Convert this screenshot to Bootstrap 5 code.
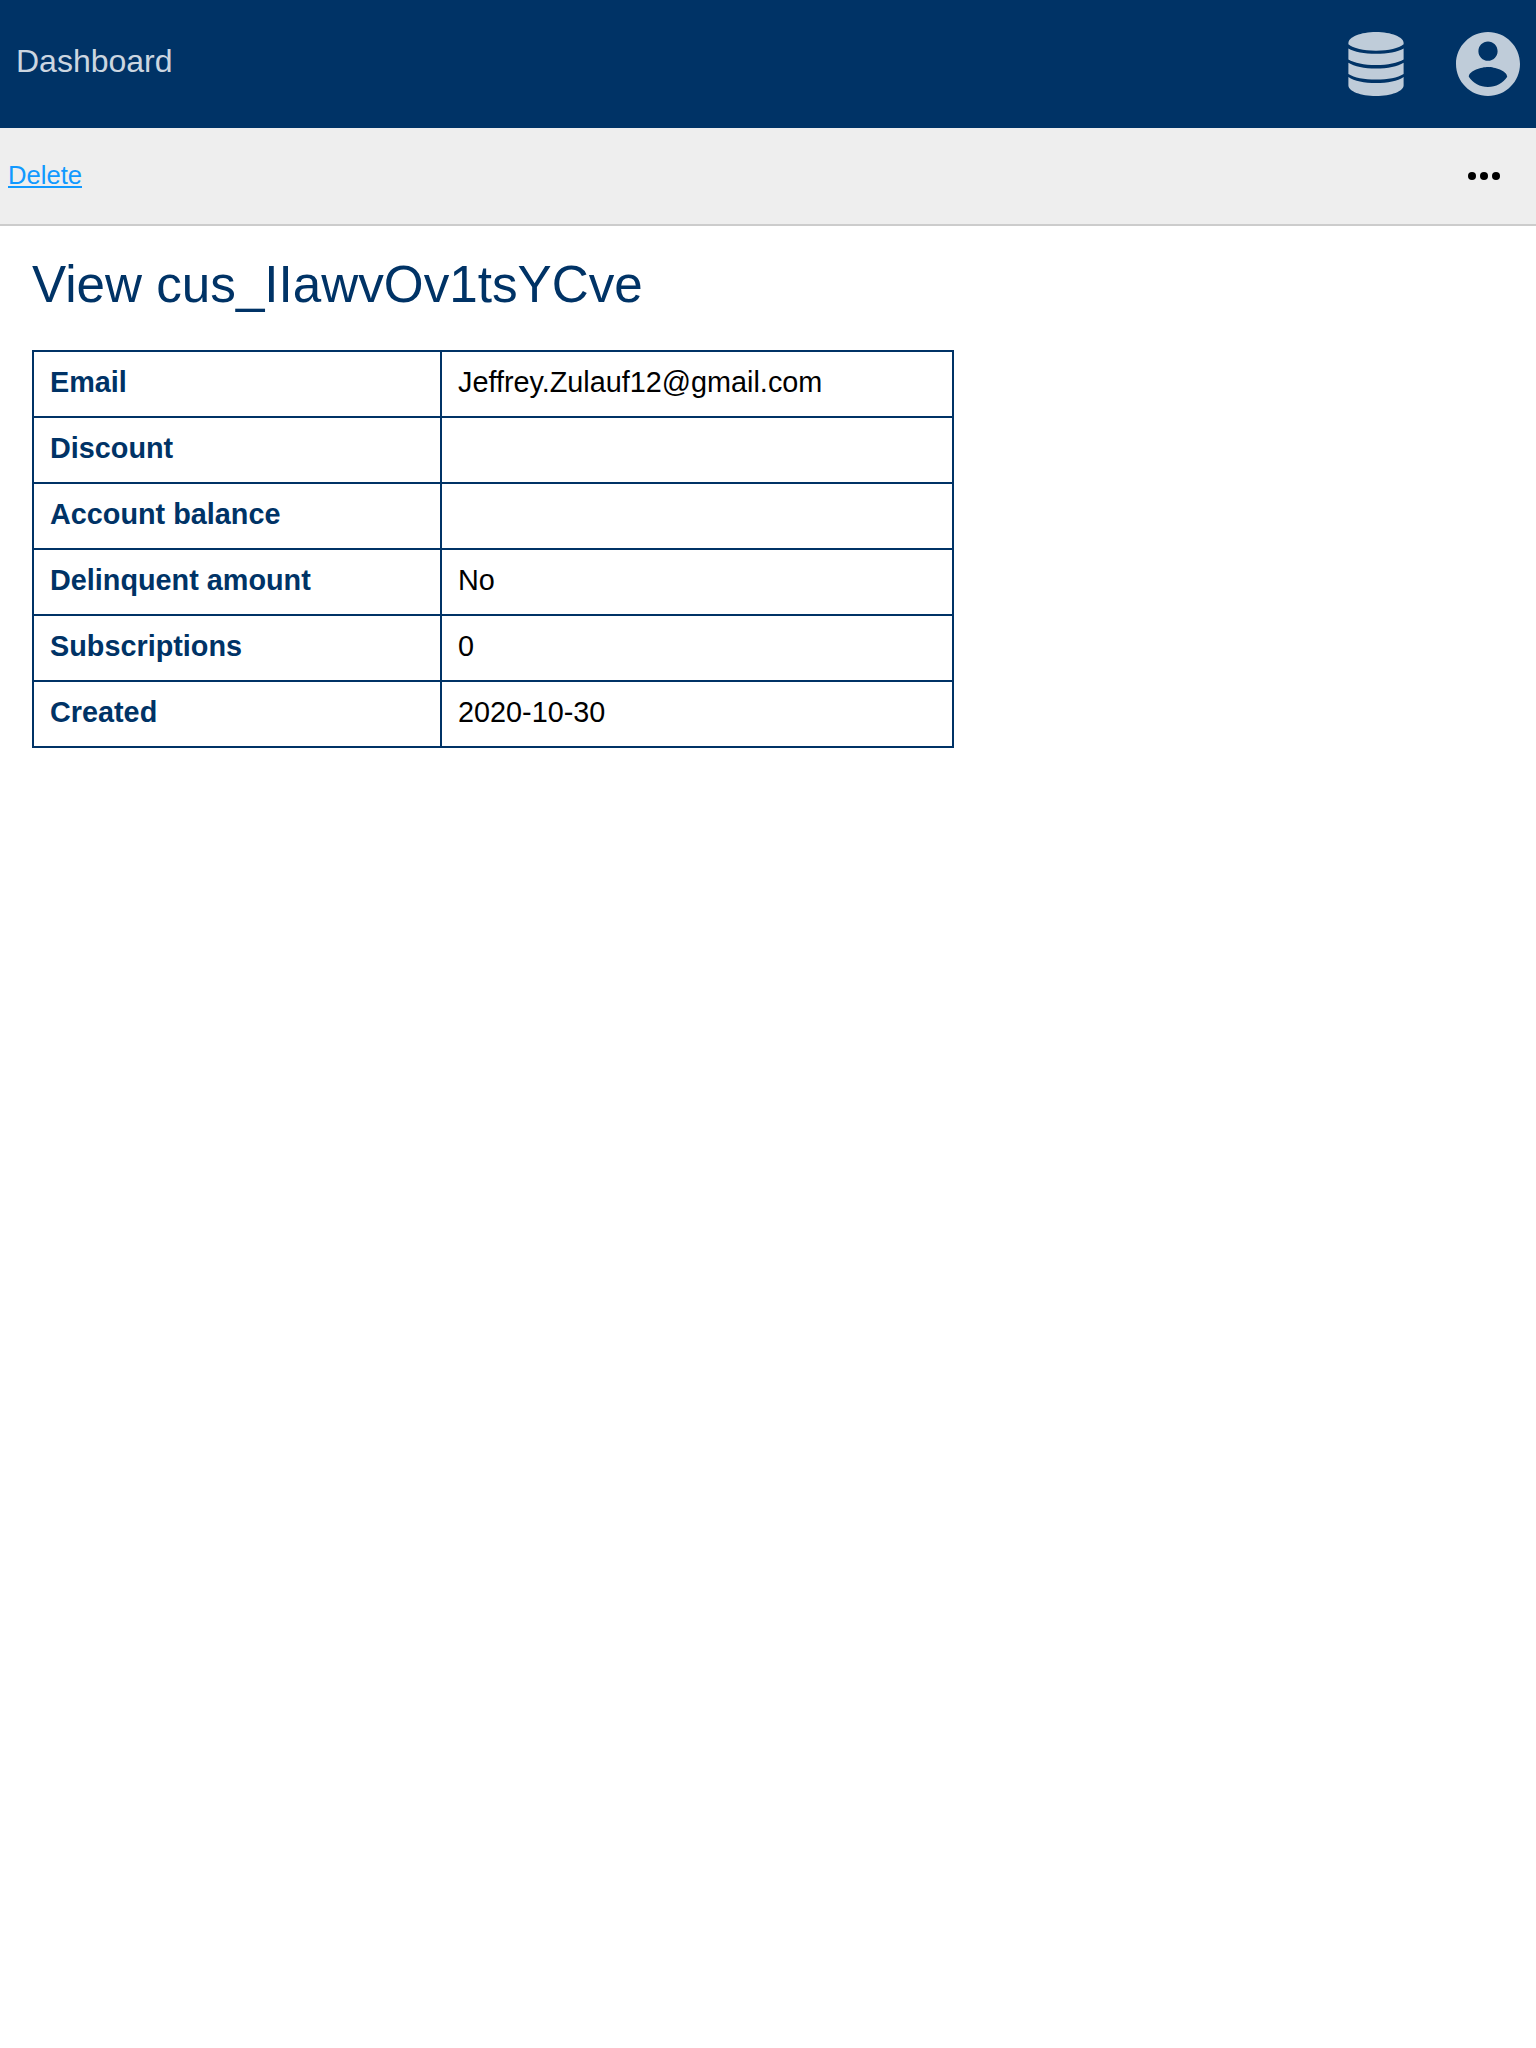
<!DOCTYPE html>
<html lang="en">
<head>
<meta charset="utf-8">
<meta name="viewport" content="width=device-width, initial-scale=1">
<title>View customer</title>
<link href="https://cdn.jsdelivr.net/npm/bootstrap@5.3.0/dist/css/bootstrap.min.css" rel="stylesheet">
<style>
  body { font-family: "Liberation Sans", Arial, sans-serif; color: #000; background: #fff; }
  .site-header { height: 128px; background: #003366; padding: 0 16px; }
  .site-title { font-size: 32px; line-height: 32px; color: #ccd6e0; margin-bottom: 6px; }
  .header-icons { gap: 52px; color: #bfccd9; }
  .toolbar-strip { height: 98px; background: #eee; border-bottom: 2px solid #ccc; padding: 0 36px 0 8px; }
  .delete-link { font-size: 25.6px; line-height: 32px; color: #1199ff; margin-bottom: 2px; text-decoration-thickness: 2px !important; text-underline-offset: 2px; }
  .page-body { padding: 27px 32px; }
  .page-title { font-size: 51.2px; line-height: 64px; font-weight: 400; color: #003366; margin-bottom: 33px; }
  .detail-table { width: 922px; table-layout: fixed; border-collapse: separate; border-spacing: 0; font-size: 28.8px; line-height: 32px; border: 2px solid #003366; border-bottom: 0; }
  .detail-table th, .detail-table td { padding: 14px 16px 18px; border-bottom: 2px solid #003366; }
  .detail-table th { width: 408px; color: #003366; border-right: 2px solid #003366; }
</style>
</head>
<body>
<header class="site-header d-flex align-items-center justify-content-between">
  <a class="site-title text-decoration-none" href="#">Dashboard</a>
  <nav class="header-icons d-flex align-items-center">
    <a href="#" class="d-flex text-reset" aria-label="Data">
      <svg width="56" height="64" viewBox="-0.4 0 56.8 64" preserveAspectRatio="none" fill="currentColor">
        <path d="M0 11C0 5 12.500 0 28 0S56 5 56 11V12.300C51 16.500 41 18.700 28 18.700S5 16.500 0 12.300Z"/>
        <path d="M0 16.500C6 20 16 21.800 28 21.800S50 20 56 16.500V27.500C50 31 40 33 28 33S6 31 0 27.500Z"/>
        <path d="M0 30.700C6 34.500 16 36.600 28 36.600S50 34.500 56 30.700V42C50 45.700 40 47.600 28 47.600S6 45.700 0 42Z"/>
        <path d="M0 45C6 49 16 51 28 51S50 49 56 45V53.500C56 59.300 43.500 64 28 64S0 59.300 0 53.500Z"/>
      </svg>
    </a>
    <a href="#" class="d-flex text-reset" aria-label="Account">
      <svg width="64" height="64" viewBox="2 2 20 20" fill="currentColor">
        <path d="M12 2C6.480 2 2 6.480 2 12s4.480 10 10 10 10-4.480 10-10S17.520 2 12 2zm0 3c1.660 0 3 1.340 3 3s-1.340 3-3 3-3-1.340-3-3 1.340-3 3-3zm0 14.200c-2.500 0-4.710-1.280-6-3.220.030-1.990 4-3.080 6-3.080 1.990 0 5.970 1.090 6 3.080-1.290 1.940-3.500 3.220-6 3.220z"/>
      </svg>
    </a>
  </nav>
</header>
<div class="toolbar-strip d-flex align-items-center justify-content-between">
  <a class="delete-link text-decoration-underline" href="#">Delete</a>
  <a href="#" class="d-flex text-black" aria-label="More">
    <svg width="32" height="8" viewBox="0 0 32 8" fill="currentColor"><circle cx="4" cy="4" r="4"/><circle cx="16" cy="4" r="4"/><circle cx="28" cy="4" r="4"/></svg>
  </a>
</div>
<main class="page-body">
  <h1 class="page-title">View cus_IIawvOv1tsYCve</h1>
  <table class="detail-table">
    <tbody>
      <tr><th scope="row">Email</th><td>Jeffrey.Zulauf12@gmail.com</td></tr>
      <tr><th scope="row">Discount</th><td></td></tr>
      <tr><th scope="row">Account balance</th><td></td></tr>
      <tr><th scope="row">Delinquent amount</th><td>No</td></tr>
      <tr><th scope="row">Subscriptions</th><td>0</td></tr>
      <tr><th scope="row">Created</th><td>2020-10-30</td></tr>
    </tbody>
  </table>
</main>
<script src="https://cdn.jsdelivr.net/npm/bootstrap@5.3.0/dist/js/bootstrap.bundle.min.js"></script>
</body>
</html>
